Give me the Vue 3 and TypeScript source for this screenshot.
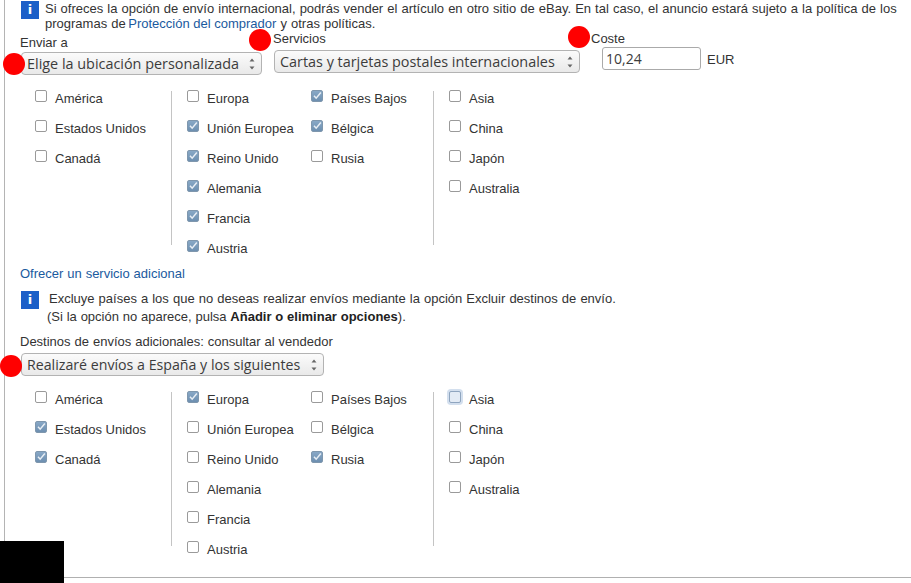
<script setup lang="ts">
interface Item { label: string; checked?: boolean; focus?: boolean }
const makeItems = (labels: string[], checked: string[], focus = ''): Item[] =>
  labels.map((label) => ({ label, checked: checked.includes(label), focus: label === focus }))

const col1 = ['América', 'Estados Unidos', 'Canadá']
const col2 = ['Europa', 'Unión Europea', 'Reino Unido', 'Alemania', 'Francia', 'Austria']
const col3 = ['Países Bajos', 'Bélgica', 'Rusia']
const col4 = ['Asia', 'China', 'Japón', 'Australia']

const groups = [
  {
    a: makeItems(col1, []),
    b: makeItems(col2, ['Unión Europea', 'Reino Unido', 'Alemania', 'Francia', 'Austria']),
    c: makeItems(col3, ['Países Bajos', 'Bélgica']),
    d: makeItems(col4, []),
  },
  {
    a: makeItems(col1, ['Estados Unidos', 'Canadá']),
    b: makeItems(col2, ['Europa']),
    c: makeItems(col3, ['Rusia']),
    d: makeItems(col4, [], 'Asia'),
  },
]
const firstGroup = groups[0]
const secondGroup = groups[1]
</script>

<template>
  <div class="page">
    <div class="rail">
      <div class="info first-info">
        <span class="info-icon">i</span>
        <p class="info-text">Si ofreces la opción de envío internacional, podrás vender el artículo en otro sitio de eBay. En tal caso, el anuncio estará sujeto a la política de los programas de <a class="link">Protección del comprador</a> y otras políticas.</p>
      </div>

      <div class="fields">
        <div class="field field-ship">
          <label class="label">Enviar a</label>
          <div class="select select-ship">
            <span>Elige la ubicación personalizada</span>
            <svg class="updown" viewBox="0 0 8 14"><path d="M1.5 4.5 4 1.5 6.5 4.5ZM1.5 9.5 4 12.5 6.5 9.5Z" /></svg>
          </div>
        </div>
        <div class="field field-service">
          <label class="label">Servicios</label>
          <div class="select select-service">
            <span>Cartas y tarjetas postales internacionales</span>
            <svg class="updown" viewBox="0 0 8 14"><path d="M1.5 4.5 4 1.5 6.5 4.5ZM1.5 9.5 4 12.5 6.5 9.5Z" /></svg>
          </div>
        </div>
        <div class="field field-cost">
          <label class="label">Coste</label>
          <div class="cost-row">
            <div class="cost-input">10,24</div>
            <span class="currency">EUR</span>
          </div>
        </div>
      </div>

      <div class="group">
        <div class="col col-a">
          <div v-for="item in firstGroup.a" :key="item.label" class="row">
            <span class="check" :class="{ on: item.checked, focus: item.focus }">
              <svg v-if="item.checked" viewBox="0 0 12 12"><path d="M2.4 5.6 5 8.6 10.6 1.8" /></svg>
            </span>
            <span>{{ item.label }}</span>
          </div>
        </div>
        <div class="divider"></div>
        <div class="col col-b">
          <div v-for="item in firstGroup.b" :key="item.label" class="row">
            <span class="check" :class="{ on: item.checked, focus: item.focus }">
              <svg v-if="item.checked" viewBox="0 0 12 12"><path d="M2.4 5.6 5 8.6 10.6 1.8" /></svg>
            </span>
            <span>{{ item.label }}</span>
          </div>
        </div>
        <div class="col col-c">
          <div v-for="item in firstGroup.c" :key="item.label" class="row">
            <span class="check" :class="{ on: item.checked, focus: item.focus }">
              <svg v-if="item.checked" viewBox="0 0 12 12"><path d="M2.4 5.6 5 8.6 10.6 1.8" /></svg>
            </span>
            <span>{{ item.label }}</span>
          </div>
        </div>
        <div class="divider"></div>
        <div class="col col-d">
          <div v-for="item in firstGroup.d" :key="item.label" class="row">
            <span class="check" :class="{ on: item.checked, focus: item.focus }">
              <svg v-if="item.checked" viewBox="0 0 12 12"><path d="M2.4 5.6 5 8.6 10.6 1.8" /></svg>
            </span>
            <span>{{ item.label }}</span>
          </div>
        </div>
      </div>

      <a class="link extra">Ofrecer un servicio adicional</a>

      <div class="info second-info">
        <span class="info-icon">i</span>
        <p class="info-text second-text">
          <span class="line-one">Excluye países a los que no deseas realizar envíos mediante la opción Excluir destinos de envío.</span>
          <span class="line-two">(Si la opción no aparece, pulsa <b>Añadir o eliminar opciones</b>).</span>
        </p>
      </div>

      <div class="destinos">Destinos de envíos adicionales: consultar al vendedor</div>
      <div class="select select-dest">
        <span>Realizaré envíos a España y los siguientes</span>
        <svg class="updown" viewBox="0 0 8 14"><path d="M1.5 4.5 4 1.5 6.5 4.5ZM1.5 9.5 4 12.5 6.5 9.5Z" /></svg>
      </div>

      <div class="group second-group">
        <div class="col col-a">
          <div v-for="item in secondGroup.a" :key="item.label" class="row">
            <span class="check" :class="{ on: item.checked, focus: item.focus }">
              <svg v-if="item.checked" viewBox="0 0 12 12"><path d="M2.4 5.6 5 8.6 10.6 1.8" /></svg>
            </span>
            <span>{{ item.label }}</span>
          </div>
        </div>
        <div class="divider"></div>
        <div class="col col-b">
          <div v-for="item in secondGroup.b" :key="item.label" class="row">
            <span class="check" :class="{ on: item.checked, focus: item.focus }">
              <svg v-if="item.checked" viewBox="0 0 12 12"><path d="M2.4 5.6 5 8.6 10.6 1.8" /></svg>
            </span>
            <span>{{ item.label }}</span>
          </div>
        </div>
        <div class="col col-c">
          <div v-for="item in secondGroup.c" :key="item.label" class="row">
            <span class="check" :class="{ on: item.checked, focus: item.focus }">
              <svg v-if="item.checked" viewBox="0 0 12 12"><path d="M2.4 5.6 5 8.6 10.6 1.8" /></svg>
            </span>
            <span>{{ item.label }}</span>
          </div>
        </div>
        <div class="divider"></div>
        <div class="col col-d">
          <div v-for="item in secondGroup.d" :key="item.label" class="row">
            <span class="check" :class="{ on: item.checked, focus: item.focus }">
              <svg v-if="item.checked" viewBox="0 0 12 12"><path d="M2.4 5.6 5 8.6 10.6 1.8" /></svg>
            </span>
            <span>{{ item.label }}</span>
          </div>
        </div>
      </div>
    </div>
    <div class="bottom-line"></div>

    <span class="dot dot-a"></span>
    <span class="dot dot-b"></span>
    <span class="dot dot-c"></span>
    <span class="dot dot-d"></span>
    <span class="redaction"></span>
  </div>
</template>

<style scoped>
.page {
  position: relative;
  width: 911px;
  height: 583px;
  overflow: hidden;
  background: #fff;
  color: #333;
  font-family: "Liberation Sans", Arial, sans-serif;
  font-size: 13px;
}
.rail {
  margin-left: 4px;
  height: 577px;
  padding-left: 15px;
  border-left: 1px solid #b4b4b4;
  box-sizing: border-box;
}
.bottom-line {
  height: 1px;
  background: #b0b0b0;
}
.info {
  display: flex;
  align-items: flex-start;
}
.first-info {
  height: 32px;
  padding-left: 1px;
  padding-top: 1px;
  box-sizing: border-box;
}
.info-icon {
  flex: none;
  width: 18px;
  height: 18px;
  background: #1b5fc8;
  color: #fff;
  font-weight: 700;
  font-size: 13px;
  line-height: 18px;
  text-align: center;
  font-family: "DejaVu Sans", sans-serif;
}
.info-text {
  margin: 0 0 0 6px;
  width: 860px;
  line-height: 15px;
  word-spacing: 0.45px;
}
.link {
  color: #1a5a9e;
}
.info-text .link {
  margin-left: -1.5px;
  word-spacing: 0;
}
.fields {
  display: flex;
  height: 51px;
  align-items: flex-start;
}
.field {
  display: flex;
  flex-direction: column;
}
.field-ship {
  width: 253px;
  padding-top: 3px;
}
.field-service {
  width: 318px;
  margin-top: -1px;
}
.field-cost {
  margin-top: -1px;
}
.label {
  line-height: 15px;
  color: #333;
}
.field-ship .label {
  margin-bottom: 2px;
}
.field-service .label {
  margin-bottom: 4px;
}
.select {
  display: flex;
  align-items: center;
  justify-content: space-between;
  box-sizing: border-box;
  height: 23px;
  margin-left: 1px;
  padding: 0 5px 0 5px;
  border: 1px solid #b3b3b3;
  border-radius: 4px;
  background: linear-gradient(#fbfbfb, #e9e9e9);
  color: #3c3c3c;
  font-family: "Open Sans", "Noto Sans", sans-serif;
  font-size: 14.4px;
  white-space: nowrap;
}
.select-ship {
  width: 241px;
}
.select-service {
  width: 306px;
}
.select-dest {
  width: 303px;
  font-size: 14.2px;
}
.updown {
  flex: none;
  width: 8px;
  height: 14px;
}
.updown path {
  fill: #666;
}
.cost-row {
  display: flex;
  align-items: center;
  margin-top: 1px;
  margin-left: 11px;
}
.cost-input {
  box-sizing: border-box;
  width: 99px;
  height: 23px;
  padding-left: 3px;
  border: 1px solid #aaa;
  border-radius: 3px;
  font-family: "Open Sans", "Noto Sans", sans-serif;
  font-size: 14px;
  line-height: 21px;
  color: #3c3c3c;
}
.currency {
  margin-left: 6px;
  margin-top: 2px;
}
.group {
  display: flex;
  height: 180px;
  padding-left: 15px;
}
.divider {
  flex: none;
  width: 1px;
  height: 154px;
  margin-top: 8px;
  background: #c4c4c4;
}
.col-a {
  width: 136px;
}
.col-b {
  width: 124px;
  padding-left: 15px;
}
.col-c {
  width: 122px;
}
.col-d {
  padding-left: 15px;
}
.row {
  display: flex;
  align-items: center;
  height: 30px;
  white-space: nowrap;
}
.check {
  flex: none;
  position: relative;
  top: -2px;
  box-sizing: border-box;
  width: 12px;
  height: 12px;
  margin-right: 8px;
  border: 1px solid #9a9a9a;
  border-radius: 2px;
  background: #fff;
}
.check.on {
  border-color: #7f97ad;
  background: linear-gradient(#88a8c6, #6d8fb0);
}
.check.focus {
  border-color: #8fa5bf;
  background: #e3ebf5;
  box-shadow: 0 0 0 2px #d3dfee;
}
.check svg {
  display: block;
  width: 10px;
  height: 10px;
}
.check path {
  fill: none;
  stroke: #e8eef4;
  stroke-width: 1.8;
}
.extra {
  display: block;
  margin-top: 3px;
  line-height: 15px;
  word-spacing: 0.3px;
}
.second-info {
  height: 38px;
  margin-top: 10px;
  padding-left: 1px;
}
.second-text {
  display: flex;
  flex-direction: column;
  margin-left: 0;
}
.line-one {
  line-height: 15px;
  margin-left: 10px;
}
.line-two {
  line-height: 15px;
  margin-left: 8px;
  margin-top: 3px;
  word-spacing: 0.2px;
}
.line-two b {
  color: #222;
}
.destinos {
  margin-top: 5px;
  line-height: 15px;
  word-spacing: 0.33px;
}
.select-dest {
  margin-top: 4px;
}
.second-group {
  margin-top: 8px;
}
.dot {
  position: absolute;
  width: 22px;
  height: 22px;
  border-radius: 50%;
  background: #f00;
}
.dot-a { left: 249px; top: 29px; }
.dot-b { left: 568px; top: 26px; }
.dot-c { left: 3px; top: 53px; }
.dot-d { left: 0; top: 355px; }
.redaction {
  position: absolute;
  left: 0;
  top: 541px;
  width: 64px;
  height: 42px;
  background: #000;
}
</style>
